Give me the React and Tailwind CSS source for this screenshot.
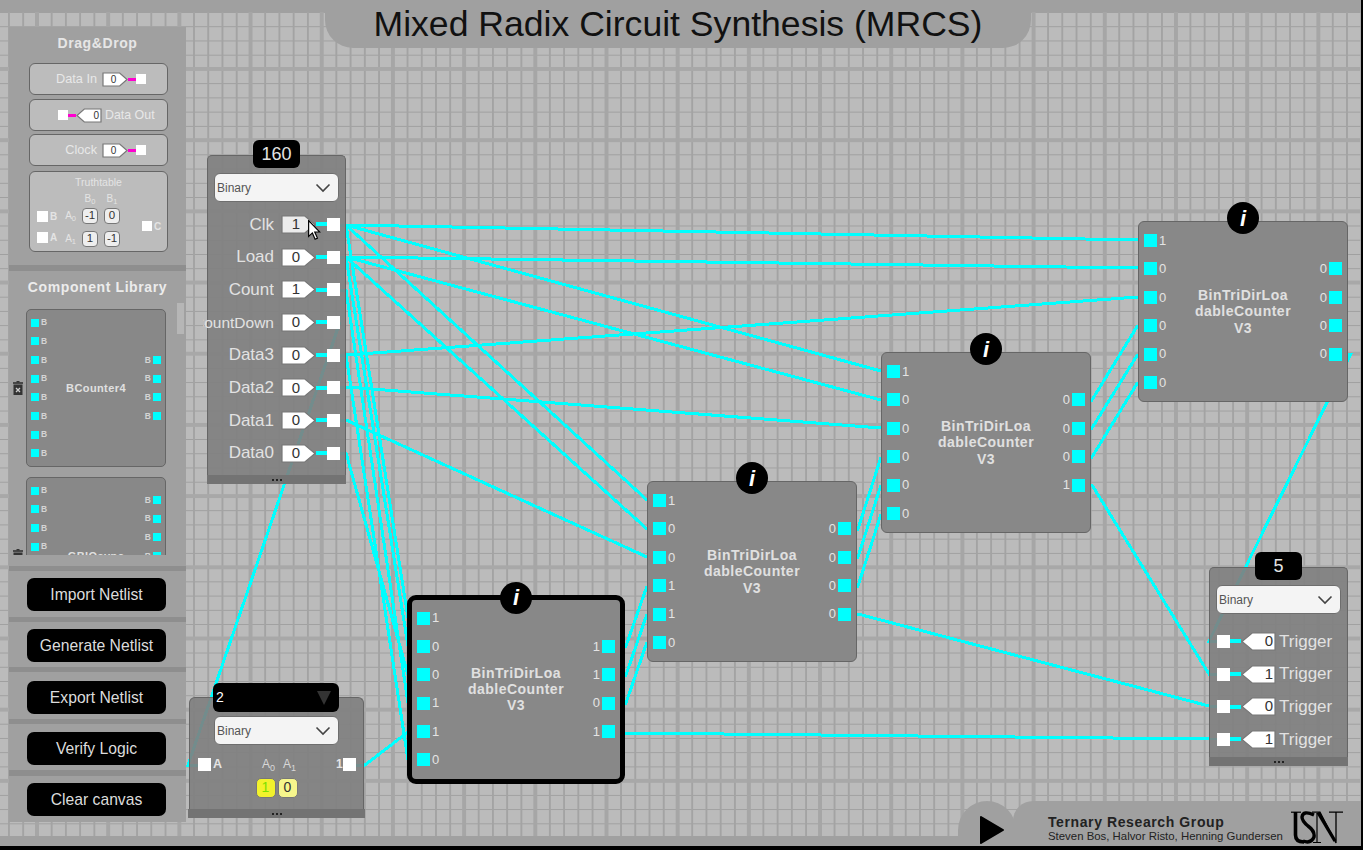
import React from 'react';

const WIRES = [
  // Clk
  [340, 225, 346, 225, 1138, 240],
  [340, 225, 346, 225, 881, 371],
  [340, 225, 346, 225, 647, 500],
  [340, 225, 346, 225, 408, 618],
  // Load
  [340, 257, 346, 257, 1138, 268],
  [340, 257, 346, 257, 881, 400],
  [340, 257, 346, 257, 647, 529],
  [340, 257, 346, 257, 408, 646],
  // Count, CountDown
  [340, 290, 346, 290, 408, 703],
  [340, 322, 188, 765, 205, 765],
  // Data
  [340, 355, 346, 355, 1138, 297],
  [340, 355, 346, 355, 408, 760],
  [340, 387, 346, 387, 881, 428],
  [340, 420, 346, 420, 647, 557],
  [340, 453, 346, 453, 408, 675],
  // truth table out
  [355, 765, 365, 765, 408, 732],
  // node 1 -> node 2
  [615, 646, 626, 646, 647, 586],
  [615, 675, 626, 675, 647, 614],
  [615, 703, 626, 703, 647, 642],
  // node 2 -> node 3
  [850, 529, 858, 529, 881, 457],
  [850, 557, 858, 557, 881, 485],
  [850, 586, 858, 586, 881, 514],
  // node 3 -> node 4
  [1085, 400, 1092, 400, 1138, 325],
  [1085, 428, 1092, 428, 1138, 354],
  [1085, 457, 1092, 457, 1138, 382],
  // outputs
  [1342, 354, 1351, 354, 1209, 641, 1223, 641],
  [1085, 485, 1092, 485, 1209, 674, 1223, 674],
  [850, 614, 858, 614, 1209, 706, 1223, 706],
  [615, 733, 626, 733, 1209, 739, 1223, 739],
];

const IN_ROWS = [
  ['Clk', '1', true],
  ['Load', '0'],
  ['Count', '1'],
  ['CountDown', '0'],
  ['Data3', '0'],
  ['Data2', '0'],
  ['Data1', '0'],
  ['Data0', '0'],
];

const NODES = [
  { x: 1138, y: 221, inputs: '100000', outputs: '0000' },
  { x: 881, y: 352, inputs: '100000', outputs: '0001' },
  { x: 647, y: 481, inputs: '100110', outputs: '0000' },
  { x: 407, y: 594.5, inputs: '100110', outputs: '1101', selected: true },
];

const Wires = () => (
  <svg className="absolute left-0 top-0" width="1361" height="846" shapeRendering="crispEdges">
    {WIRES.map((w, i) => (
      <polyline key={i} points={w.join(' ')} fill="none" stroke="#00ffff" strokeWidth="3" />
    ))}
  </svg>
);

const Chevron = () => (
  <svg width="16" height="10" viewBox="0 0 16 10" className="shrink-0">
    <polyline points="1.5,1.5 8,8 14.5,1.5" fill="none" stroke="#444" strokeWidth="1.6" />
  </svg>
);

const BinarySelect = () => (
  <div className="flex h-[29px] w-[125px] items-center justify-between rounded-[6px] border border-[#6e6e6e] bg-[#f4f4f4] pl-[2px] pr-[7px] text-[12px] text-[#555]">
    Binary
    <Chevron />
  </div>
);

// small pentagon value box pointing right or left
const Tag = ({ value, left, small, hover }) => {
  const w = small ? 26 : 35;
  const h = small ? 15 : 19;
  const points = left
    ? `${w - 1},1 ${w * 0.32},1 1,${h / 2} ${w * 0.32},${h - 1} ${w - 1},${h - 1}`
    : `1,1 ${w * 0.68},1 ${w - 1},${h / 2} ${w * 0.68},${h - 1} 1,${h - 1}`;
  return (
    <div className={`relative flex shrink-0 items-center ${small ? 'h-[15px] w-[26px] text-[10px]' : 'h-[19px] w-[35px] text-[15px]'} ${left ? 'justify-end pr-[3px]' : small ? 'justify-center pr-[3px]' : 'justify-center pr-[5px]'} text-[#333]`}>
      <svg className="absolute left-0 top-0" width={w} height={h}>
        <polygon points={points} fill={hover ? '#ececec' : '#fff'} stroke="#777" strokeWidth="1.2" />
      </svg>
      <span className="relative">{value}</span>
    </div>
  );
};

const Trash = () => (
  <svg width="10" height="14" viewBox="0 0 10 14" className="shrink-0">
    <rect x="3.5" y="0" width="3" height="1.5" fill="#333" />
    <rect x="0" y="1.2" width="10" height="1.6" fill="#333" />
    <rect x="0.5" y="3.5" width="9" height="10.5" fill="#333" />
    <path d="M3 7l4 4M7 7l-4 4" stroke="#ccc" strokeWidth="1.3" />
  </svg>
);

const LibraryPin = ({ right }) => (
  <div className={`flex h-[8px] items-center gap-[2px] text-[8.5px] font-bold leading-none text-[#d4d4d4] ${right ? 'flex-row-reverse' : ''}`}>
    <div className="h-[8px] w-[8px] bg-[#00ffff]" />
    B
  </div>
);

const LibraryCard = ({ name, left, right, className }) => (
  <div className={`flex items-center gap-[3px] ${className}`}>
    <div className="ml-[4px]">
      <Trash />
    </div>
    <div className="flex h-[158px] w-[140px] shrink-0 items-center justify-between rounded-[5px] border border-[#666] bg-[#888] px-[4px]">
      <div className="flex flex-col gap-[10.7px]">
        {Array.from({ length: left }).map((_, i) => <LibraryPin key={i} />)}
      </div>
      <div className="text-[11px] font-bold tracking-[0.4px] text-[#e0e0e0]">{name}</div>
      <div className="flex flex-col gap-[10.7px]">
        {Array.from({ length: right }).map((_, i) => <LibraryPin key={i} right />)}
      </div>
    </div>
  </div>
);

const Divider = ({ className }) => <div className={`h-[5px] bg-[#8e8e8e] ${className}`} />;

const SideButton = ({ label, className }) => (
  <button className={`ml-[18px] flex h-[33px] w-[139px] items-center justify-center rounded-[7px] bg-black text-[15.7px] text-[#dcdcdc] ${className}`}>
    {label}
  </button>
);

const DragItem = ({ className, children }) => (
  <div className={`ml-[20px] mr-[18px] flex h-[32px] items-center rounded-[6px] border border-[#666] bg-[#bcbcbc] text-[12.7px] text-[#e8e8e8] ${className}`}>
    {children}
  </div>
);

const MiniOut = () => (
  <>
    <div className="h-[3px] w-[8px] bg-[#ff00d0]" />
    <div className="h-[10px] w-[10px] bg-white" />
  </>
);

const TruthCell = ({ value }) => (
  <div className="flex h-[16px] w-[16px] items-center justify-center rounded-[4px] border border-[#777] bg-[#eeeeee] text-[11.5px] text-[#333]">
    {value}
  </div>
);

const Sidebar = () => (
  <div className="absolute left-[9px] top-[27px] h-[795px] w-[177px] bg-[#a0a0a0]">
    <div className="flex h-[36px] items-center justify-center pb-[4px] text-[14px] font-bold tracking-[0.6px] text-[#e6e6e6]">
      Drag&amp;Drop
    </div>
    <DragItem className="justify-end pr-[21px]">
      <span className="mr-[5px] translate-y-[1px]">Data In</span>
      <Tag value="0" small />
      <MiniOut />
    </DragItem>
    <DragItem className="mt-[4px] pl-[28px]">
      <div className="h-[10px] w-[10px] bg-white" />
      <div className="h-[3px] w-[8px] bg-[#ff00d0]" />
      <Tag value="0" small left />
      <span className="ml-[3px] text-[12.4px]">Data Out</span>
    </DragItem>
    <DragItem className="mt-[3px] justify-end pr-[21px]">
      <span className="mr-[5px] translate-y-[1px]">Clock</span>
      <Tag value="0" small />
      <MiniOut />
    </DragItem>
    <div className="ml-[20px] mr-[18px] mt-[5px] h-[81px] rounded-[6px] border border-[#666] bg-[#bcbcbc] text-[#e4e4e4]">
      <div className="pt-[4px] text-center text-[10.5px] leading-[12px]">Truthtable</div>
      <div className="mt-[2px] flex">
        <div className="ml-[7px] mt-[21px] flex w-[22px] flex-col gap-[10px] text-[10px] font-bold">
          <div className="flex h-[11px] items-center gap-[2px]"><div className="h-[11px] w-[11px] bg-white" />B</div>
          <div className="flex h-[11px] items-center gap-[2px]"><div className="h-[11px] w-[11px] bg-white" />A</div>
        </div>
        <div className="ml-[3px] -mt-[1px] grid grid-cols-[14px_16px_16px] grid-rows-[12px_16px_16px] gap-x-[6px] gap-y-[7px] text-[10px] leading-none">
          <div />
          <div className="translate-y-[3px] self-end text-center">B<sub>0</sub></div>
          <div className="translate-y-[3px] self-end text-center">B<sub>1</sub></div>
          <div className="self-center justify-self-end whitespace-nowrap">A<sub>0</sub></div>
          <TruthCell value="-1" />
          <TruthCell value="0" />
          <div className="self-center justify-self-end whitespace-nowrap">A<sub>1</sub></div>
          <TruthCell value="1" />
          <TruthCell value="-1" />
        </div>
        <div className="ml-[22px] mt-[31px] flex h-[10px] items-center gap-[2px] text-[10px] font-bold">
          <div className="h-[10px] w-[10px] bg-white" />C
        </div>
      </div>
    </div>
    <div className="mt-[13px] h-[6px] bg-[#8e8e8e]" />
    <div className="flex h-[29px] items-center justify-center pt-[3px] text-[14px] font-bold tracking-[0.6px] text-[#ececec]">
      Component Library
    </div>
    <div className="relative h-[255px] overflow-hidden pt-[9px]">
      <div className="absolute right-[2px] top-[3px] h-[31px] w-[7px] bg-[#b6b6b6]" />
      <LibraryCard name="BCounter4" left={8} right={4} />
      <LibraryCard name="GBIOsync" left={8} right={7} className="mt-[10px]" />
    </div>
    <Divider className="mt-[11px]" />
    <SideButton label="Import Netlist" className="mt-[7px]" />
    <Divider className="mt-[6px]" />
    <SideButton label="Generate Netlist" className="mt-[7px]" />
    <Divider className="mt-[5px]" />
    <SideButton label="Export Netlist" className="mt-[9px]" />
    <Divider className="mt-[5px]" />
    <SideButton label="Verify Logic" className="mt-[8px]" />
    <Divider className="mt-[5px] h-[6px]" />
    <SideButton label="Clear canvas" className="mt-[7px]" />
  </div>
);

const Handle = ({ className }) => (
  <div className={`flex h-[9px] items-center justify-center gap-[2px] bg-[#737373] ${className}`}>
    <div className="h-[2px] w-[2px] bg-[#222]" />
    <div className="h-[2px] w-[2px] bg-[#222]" />
    <div className="h-[2px] w-[2px] bg-[#222]" />
  </div>
);

const Badge = ({ value }) => (
  <div className="absolute left-[45px] top-[-16px] flex h-[28px] w-[47px] items-center justify-center rounded-[6px] bg-black text-[18px] text-[#e4e4e4]">
    {value}
  </div>
);

const InputPanel = () => (
  <div className="absolute left-[207px] top-[155px] w-[139px]">
    <div className="relative h-[320px] rounded-t-[5px] border border-b-0 border-[#666] bg-[#808080]/90 pl-[6px] pt-[17px]">
      <Badge value="160" />
      <BinarySelect />
      <div className="mt-[6px]">
        {IN_ROWS.map(([name, val, hover]) => (
          <div key={name} className="flex h-[32.7px] items-center">
            <div className={`ml-[-11px] flex w-[71px] justify-end overflow-hidden whitespace-nowrap text-[#e2e2e2] ${name === 'CountDown' ? 'text-[15.5px]' : 'text-[17px]'}`}>
              {name}
            </div>
            <div className="ml-[7px]"><Tag value={val} hover={hover} /></div>
            <div className="h-[4px] w-[11px] bg-[#00ffff]" />
            <div className="h-[13px] w-[13px] bg-white" />
          </div>
        ))}
      </div>
      <svg className="absolute left-[100px] top-[64px]" width="13" height="20" viewBox="0 0 11 17">
        <path d="M0.5 0.5V14L3.7 11L6 16.3L8 15.4L5.7 10.2H10Z" fill="#fff" stroke="#000" strokeWidth="1" />
      </svg>
    </div>
    <Handle />
  </div>
);

const OutputPanel = () => (
  <div className="absolute left-[1209px] top-[567px] w-[139px]">
    <div className="relative h-[190px] rounded-t-[5px] border border-b-0 border-[#666] bg-[#808080]/90 pl-[6px] pt-[17px]">
      <Badge value="5" />
      <BinarySelect />
      <div className="mt-[11px]">
        {['0', '1', '0', '1'].map((val, i) => (
          <div key={i} className="flex h-[32.7px] items-center pl-[1px]">
            <div className="h-[13px] w-[13px] bg-white" />
            <div className="h-[4px] w-[11px] bg-[#00ffff]" />
            <Tag value={val} left />
            <span className="ml-[3px] text-[17px] text-[#e2e2e2]">Trigger</span>
          </div>
        ))}
      </div>
    </div>
    <Handle />
  </div>
);

const TruthNode = () => (
  <div className="absolute left-[188px] top-[683px] w-[177px]">
    <div className="relative ml-[1px] mt-[14px] h-[112px] w-[175px] rounded-t-[6px] border border-b-0 border-[#666] bg-[#808080]/90">
      <div className="absolute left-[23px] top-[-15px] flex h-[29px] w-[126px] items-center justify-between rounded-[6px] bg-black pl-[3px] pr-[8px] text-[14px] text-white">
        2
        <svg width="14" height="14" viewBox="0 0 14 14"><polygon points="0,0 14,0 7,14" fill="#333" /></svg>
      </div>
      <div className="ml-[24px] pt-[18px]"><BinarySelect /></div>
      <div className="mt-[10px] flex items-center pl-[8px] text-[#e4e4e4]">
        <div className="h-[13px] w-[13px] bg-white" />
        <span className="ml-[2px] text-[12.5px] font-bold">A</span>
        <span className="ml-[40px] text-[12px] text-[#d8d8d8]">A<sub>0</sub></span>
        <span className="ml-[8px] text-[12px] text-[#d8d8d8]">A<sub>1</sub></span>
        <span className="ml-[40px] text-[12px] font-bold">1</span>
        <div className="h-[13px] w-[13px] bg-white" />
      </div>
      <div className="mt-[4px] flex justify-center gap-[2px]">
        <div className="flex h-[20px] w-[20px] items-center justify-center rounded-[5px] border border-[#777] bg-[#f2f22c] text-[14px] text-[#7de000]">1</div>
        <div className="flex h-[20px] w-[20px] items-center justify-center rounded-[5px] border border-[#777] bg-[#f6f68c] text-[14px] text-[#333]">0</div>
      </div>
    </div>
    <Handle />
  </div>
);

const Port = ({ value, right }) => (
  <div className={`flex h-[13px] items-center gap-[2px] text-[13px] text-[#e4e4e4] ${right ? 'flex-row-reverse' : ''}`}>
    <div className="h-[13px] w-[13px] bg-[#00ffff]" />
    {value}
  </div>
);

const CounterNode = ({ x, y, inputs, outputs, selected }) => (
  <div
    className={`absolute box-content h-[179px] w-[208px] bg-[#888] ${selected ? 'rounded-[9px] border-[5px] border-black' : 'rounded-[6px] border border-[#666]'}`}
    style={{ left: x, top: y }}
  >
    <div className="absolute inset-0 overflow-hidden rounded-[5px]">
      <div className="flex h-full justify-between px-[5px] pt-[12px]">
        <div className="flex flex-col gap-[15.4px]">
          {inputs.split('').map((v, i) => <Port key={i} value={v} />)}
        </div>
        <div className="flex flex-1 items-center justify-center pb-[12px] text-center text-[14px] font-bold leading-[16.3px] tracking-[0.5px] text-[#e0e0e0]">
          <div>BinTriDirLoa<br />dableCounter<br />V3</div>
        </div>
        <div className="flex flex-col gap-[15.4px] pt-[28.4px]">
          {outputs.split('').map((v, i) => <Port key={i} value={v} right />)}
        </div>
      </div>
    </div>
    <div className={`absolute left-1/2 flex h-[32px] w-[32px] -translate-x-1/2 items-center justify-center rounded-full bg-black text-[22px] font-bold italic text-white ${selected ? 'top-[-18px]' : 'top-[-20px]'}`}>
      i
    </div>
  </div>
);

const UsnLogo = () => (
  <svg width="53" height="33" viewBox="0 0 53 33" fill="none" stroke="#000">
    <path d="M0 1.2H10" strokeWidth="1.2" />
    <path d="M4.5 1V24Q4.5 31 13 31" strokeWidth="3.6" />
    <path d="M23 4Q12 -1 11 6Q11 10 17 15Q24 20 23 26Q20 33 12 30" strokeWidth="3.4" />
    <path d="M21 1.2H29L45 32V1" strokeWidth="1.3" />
    <path d="M27 1.5L44 30" strokeWidth="3.4" />
    <path d="M26 2V31M22 31.5H30M38 1.2H52" strokeWidth="1.2" />
  </svg>
);

const Footer = () => (
  <div className="absolute left-[958px] top-[801px] flex h-[35px] items-start">
    <div className="flex h-[35px] w-[58px] items-center justify-center rounded-t-[29px] bg-[#a0a0a0] pt-[22px]">
      <svg width="26" height="30" viewBox="0 0 26 30" className="ml-[10px]">
        <path d="M2 2L24 15L2 28Z" fill="#000" stroke="#000" strokeWidth="2" strokeLinejoin="round" />
      </svg>
    </div>
    <div className="-ml-[3px] flex h-[35px] w-[348px] items-start rounded-tl-[20px] bg-[#a0a0a0] pl-[35px]">
      <div className="mt-[14px] w-[243px] text-[#222]">
        <div className="text-[14px] font-bold leading-[15px] tracking-[0.6px]">Ternary Research Group</div>
        <div className="text-[11.4px] leading-[13px]">Steven Bos, Halvor Risto, Henning Gundersen</div>
      </div>
      <div className="mt-[10px]"><UsnLogo /></div>
    </div>
  </div>
);

export default function App() {
  return (
    <div className="h-[850px] overflow-hidden bg-black [font-family:'Liberation_Sans',sans-serif]">
      <div className="relative flex h-[846px] w-[1361px] flex-col justify-between bg-[#bbbbbb] bg-[image:linear-gradient(90deg,#a6a6a6_4px,transparent_4px),linear-gradient(180deg,#a8a8a8_4px,transparent_4px),linear-gradient(90deg,#a3a3a3_1.5px,transparent_1.5px),linear-gradient(180deg,#9f9f9f_1.3px,transparent_1.3px)] bg-[size:71.2px_71.2px,71.2px_71.2px,14.24px_14.24px,14.24px_14.24px] bg-[position:35px_0,0_67px,8px_0,0_12px]">
        <div className="h-[12px] bg-[#a0a0a0]" />
        <div className="h-[10px] bg-[#a0a0a0]" />
        <Wires />
        <div className="absolute left-[325px] top-0 flex h-[48px] w-[706px] items-center justify-center rounded-b-[28px] bg-[#a0a0a0] pt-[2px] text-[35.6px] text-[#111]">
          Mixed Radix Circuit Synthesis (MRCS)
        </div>
        <Sidebar />
        <InputPanel />
        <TruthNode />
        {NODES.map((n) => <CounterNode key={n.x} {...n} />)}
        <OutputPanel />
        <Footer />
      </div>
    </div>
  );
}
